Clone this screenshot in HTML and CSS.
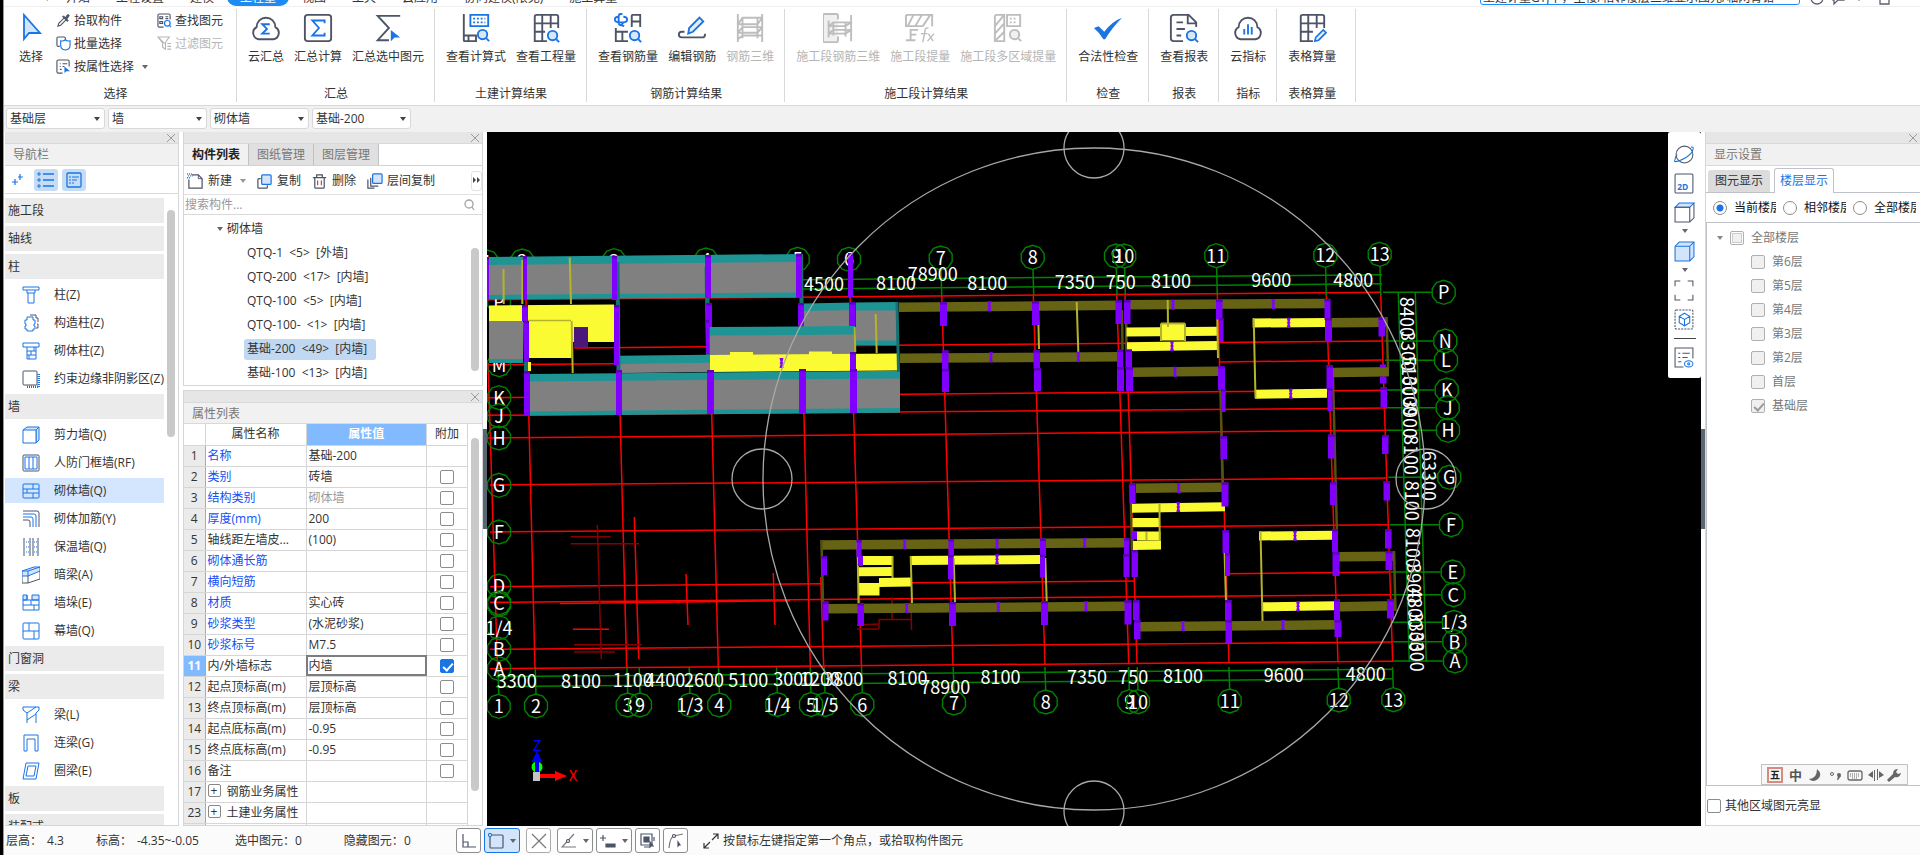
FILE: index.html
```html
<!DOCTYPE html>
<html lang="zh-CN">
<head>
<meta charset="utf-8">
<title>土建计量</title>
<link rel="stylesheet" href="styles.css">
</head>
<body>
<div class="app">
  <header class="tabstrip">
    <nav class="tabs">
      <button class="tab quick">▾</button>
      <button class="tab">开始</button><button class="tab">工程设置</button><button class="tab">建模</button><button class="tab active">工程量</button><button class="tab">视图</button><button class="tab">工具</button><button class="tab">云应用</button><button class="tab">协同建模(限免)</button><button class="tab">施工算量</button>
    </nav>
    <div class="finder">
      <input class="finder-input" aria-label="搜索" value="土建计量GTJ中，主楼/相邻楼层三维显示图元/轴网背错">
      <svg class="finder-icons" width="100" height="20" viewBox="0 0 100 20"><g fill="none" stroke="#5a6070" stroke-width="1.3"><circle cx="17" cy="12" r="6"/><path d="M33 6h11v8h-6l-4 4v-4h-1z"/><path d="M59 6v8m-4-4l4 4l4-4"/><path d="M80 7h9v11h-9z"/></g></svg>
    </div>
  </header>

  <section class="ribbon">
    <div class="group">
      <div class="tools">
        <button class="big pick"><svg class="ico" viewBox="0 0 30 30"><path d="M8 2v24l5-6h11z" fill="#d3e5fb" stroke="#1b74e4" stroke-width="1.8"/></svg>选择</button>
        <div class="smalls">
          <button class="small"><svg viewBox="0 0 16 16"><path d="M2 14l1-3l6-6l2 2l-6 6z" fill="none" stroke="#4d5468" stroke-width="1.2"/><path d="M8 3l5 5l-1 1l-5-5zM10 5l2-3q2-1 2 1l-2 3z" fill="#4d5468" stroke="#4d5468"/></svg>拾取构件</button>
          <button class="small"><svg viewBox="0 0 16 16"><g fill="none" stroke="#4d5468" stroke-width="1.2"><path d="M4 11H2.500q-1.500 0-1.500-1.500v-7q0-1.500 1.500-1.500h6q1.500 0 1.500 1.500V4"/><path d="M5 5q3 1 5-1q2 2 5 1v5q0 4-5 5q-5-1-5-5z" stroke="#1b74e4" fill="#fff"/></g></svg>批量选择</button>
          <button class="small"><svg viewBox="0 0 16 16"><g fill="none" stroke="#4d5468" stroke-width="1.200"><path d="M7 15H2.500Q1 15 1 13.500v-11Q1 1 2.500 1h10Q14 1 14 2.500V8"/><path d="M4 5h1m2 0h5M4 8h1m2 0h2M4 11h2"/></g><path d="M9 8v7l2-2h4z" fill="#1b74e4"/></svg>按属性选择<span class="caret"></span></button>
        </div>
        <div class="smalls second">
          <button class="small"><svg viewBox="0 0 16 16"><g fill="none" stroke="#4d5468" stroke-width="1.200"><path d="M7 15H2.500Q1 15 1 13.500v-11Q1 1 2.500 1h10Q14 1 14 2.500V7"/><path d="M3 4h3v2H3zm6 0h3M9 6h3M3 9h3v2H3z"/></g><circle cx="11" cy="11" r="3" fill="#fff" stroke="#1b74e4" stroke-width="1.300"/><path d="M13 13l2 2" stroke="#1b74e4" stroke-width="1.300"/></svg>查找图元</button>
          <button class="small" disabled><svg viewBox="0 0 16 16"><g fill="none" stroke="#b5b5b5" stroke-width="1.200"><path d="M1 1h12l-4 6v7l-3-2V7z"/><path d="M3 3l5 5M11 8h4m-4 3h4m-4 3h4"/></g></svg>过滤图元</button>
        </div>
      </div>
      <div class="caption">选择</div>
    </div>
    <div class="group">
      <div class="tools">
        <button class="big"><svg class="ico" viewBox="0 0 32 32"><path d="M8 28h16a7 7 0 0 0 2-13a10 10 0 0 0-20 0a7 7 0 0 0 2 13z" fill="none" stroke="#4d5468" stroke-width="2"/><path d="M20 12h-8l5 5l-5 5h8" fill="none" stroke="#1b74e4" stroke-width="2"/></svg>云汇总</button>
        <button class="big"><svg class="ico" viewBox="0 0 32 32"><rect x="2" y="2" width="28" height="28" rx="3" fill="none" stroke="#4d5468" stroke-width="2"/><path d="M23 11V8H10l7 8l-7 8h13v-3" fill="none" stroke="#1b74e4" stroke-width="2"/></svg>汇总计算</button>
        <button class="big"><svg class="ico" viewBox="0 0 32 32"><path d="M29 3H5l12 13L5 29h12" fill="none" stroke="#4d5468" stroke-width="2"/><path d="M19 18v12l4-4h6z" fill="#1b74e4"/></svg>汇总选中图元</button>
      </div>
      <div class="caption">汇总</div>
    </div>
    <div class="group">
      <div class="tools">
        <button class="big"><svg class="ico" viewBox="0 0 32 32"><path d="M3 1v28q0 1 1 1h12v-6H8v6M3 24h5" fill="none" stroke="#4d5468" stroke-width="2"/><path d="M10 2h19v12H10z" fill="none" stroke="#1b74e4" stroke-width="2"/><path d="M13 6h13M13 10h13" stroke="#1b74e4" stroke-width="2" stroke-dasharray="2 2"/><g fill="#d8e8fb" stroke="#1b74e4" stroke-width="2"><circle cx="23" cy="23" r="5"/><path d="M27 27l3 3"/></g></svg>查看计算式</button>
        <button class="big"><svg class="ico" viewBox="0 0 32 32"><g fill="none" stroke="#4d5468" stroke-width="2"><path d="M17 30H4V4q0-2 2-2h21q2 0 2 2v12M4 11h25M4 20h11M12 2v28M21 2v14"/></g><g fill="#d8e8fb" stroke="#1b74e4" stroke-width="2"><circle cx="23" cy="24" r="5"/><path d="M27 28l3 3"/></g></svg>查看工程量</button>
      </div>
      <div class="caption">土建计算结果</div>
    </div>
    <div class="group">
      <div class="tools">
        <button class="big"><svg class="ico" viewBox="0 0 32 32"><g fill="none" stroke="#1b74e4" stroke-width="2"><path d="M10 1H8q-2 0-2 3v6q0 3 3 3M6 4Q2 4 2 7t5 3h4q4 0 4-3t-4-3M11 10l-2 3l3 1"/></g><g fill="none" stroke="#4d5468" stroke-width="2"><path d="M20 15V3q0-1 1-1h8v13M20 9h9M3 16v14h13M3 20h13M10 20v10"/></g><g fill="#d8e8fb" stroke="#1b74e4" stroke-width="2"><circle cx="23" cy="24" r="5"/><path d="M27 28l3 3"/></g></svg>查看钢筋量</button>
        <button class="big"><svg class="ico" viewBox="0 0 32 32"><path d="M8 20H5q-3 0-3 3t3 3h22q3 0 3-4" fill="none" stroke="#4d5468" stroke-width="2"/><path d="M12 22l1-6L24 5l4 4L17 20z" fill="#e3eefc" stroke="#1b74e4" stroke-width="2"/></svg>编辑钢筋</button>
        <button class="big" disabled><svg class="ico" viewBox="0 0 32 32"><g fill="none" stroke="#bdbdbd" stroke-width="2"><path d="M3 1v30M8 5v22M29 1v30M24 5v22M3 12l5-7h21M3 12h21l5-7M3 21l5-6h21M3 21h21l5-6M3 28l5-4h21"/></g></svg>钢筋三维</button>
      </div>
      <div class="caption">钢筋计算结果</div>
    </div>
    <div class="group">
      <div class="tools">
        <button class="big" disabled><svg class="ico" viewBox="0 0 32 32"><g fill="none" stroke="#bdbdbd" stroke-width="2"><path d="M16 7V3q0-2-2-2H2Q0 1 0 3v26q0 2 2 2h12q2 0 2-2v-4" fill="#f0f0f0"/><path d="M6 8v18M11 10v14M30 2v28M24 9v16M6 14l5-4h19M6 14h18l6-4M6 22l5-4h19M6 22h18l6-4"/></g></svg>施工段钢筋三维</button>
        <button class="big" disabled><svg class="ico" viewBox="0 0 32 32"><g fill="none" stroke="#bdbdbd" stroke-width="2"><path d="M1 2h28v12M1 2v12h18M9 2L3 14M18 2l-7 12M27 2l-8 12M1 29h10M6 29V18h8M6 23h6"/><path d="M25 16q-4-1-4 5l-2 10M17 22h7M25 22l5 8M31 22l-7 8" stroke-width="1.500"/></g></svg>施工段提量</button>
        <button class="big" disabled><svg class="ico" viewBox="0 0 32 32"><g fill="none" stroke="#bdbdbd" stroke-width="2"><path d="M12 30H2V4q0-2 2-2h8zM12 2L2 14M12 11L2 22M12 20L2 30M15 2h14v12H15z"/><path d="M18 6h8M18 10h8" stroke-dasharray="2 2"/><circle cx="23" cy="23" r="5" fill="#f0f0f0"/><path d="M27 27l3 3"/></g></svg>施工段多区域提量</button>
      </div>
      <div class="caption">施工段计算结果</div>
    </div>
    <div class="group">
      <div class="tools"><button class="big"><svg class="ico" viewBox="0 0 32 32"><path d="M1 16l5-2l6 6Q20 9 31 5Q20 16 13 28h-2Q7 21 1 16z" fill="#1b74e4"/></svg>合法性检查</button></div>
      <div class="caption">检查</div>
    </div>
    <div class="group">
      <div class="tools"><button class="big"><svg class="ico" viewBox="0 0 32 32"><g fill="none" stroke="#4d5468" stroke-width="2"><path d="M15 30H5q-3 0-3-3V5q0-3 3-3h16l8 8v5M20 2v9h9M8 10h7M8 17h9M8 24h5"/></g><g fill="#d8e8fb" stroke="#1b74e4" stroke-width="2"><circle cx="24" cy="24" r="5"/><path d="M28 28l3 3"/></g></svg>查看报表</button></div>
      <div class="caption">报表</div>
    </div>
    <div class="group">
      <div class="tools"><button class="big"><svg class="ico" viewBox="0 0 32 32"><path d="M8 28h16a7 7 0 0 0 2-13a10 10 0 0 0-20 0a7 7 0 0 0 2 13z" fill="none" stroke="#4d5468" stroke-width="2"/><path d="M12 17v6M16 12v11M20 15v8" stroke="#1b74e4" stroke-width="2"/></svg>云指标</button></div>
      <div class="caption">指标</div>
    </div>
    <div class="group last">
      <div class="tools"><button class="big"><svg class="ico" viewBox="0 0 32 32"><g fill="none" stroke="#4d5468" stroke-width="2"><path d="M17 30H4V4q0-2 2-2h21q2 0 2 2v12M4 11h25M4 20h13M12 2v28M21 2v14"/></g><path d="M19 30l1-4l8-8l3 3l-8 8z" fill="#e3eefc" stroke="#1b74e4" stroke-width="1.700"/></svg>表格算量</button></div>
      <div class="caption">表格算量</div>
    </div>
  </section>

  <section class="filters">
    <label class="combo"><select aria-label="楼层"><option>基础层</option></select></label>
    <label class="combo"><select aria-label="构件类别"><option>墙</option></select></label>
    <label class="combo"><select aria-label="构件类型"><option>砌体墙</option></select></label>
    <label class="combo"><select aria-label="构件"><option>基础-200</option></select></label>
  </section>

  <main class="workspace">
    <aside class="panel nav">
      <div class="grip"><button class="close" aria-label="关闭导航栏"></button></div>
      <h2 class="title">导航栏</h2>
      <div class="navbar">
        <button class="navtool" aria-label="展开"><svg width="24" height="22" viewBox="0 0 24 22"><path d="M6 13h6M9 10v6M12 8h5M14 5v6" stroke="#1b74e4" stroke-width="1.200"/></svg></button>
        <button class="navtool on" aria-label="列表"><svg width="24" height="22" viewBox="0 0 24 22"><path d="M9 5h11M9 11h11M9 17h11" stroke="#1b74e4" stroke-width="1.300"/><path d="M4 4h2v2H4zM4 10h2v2H4zM4 16h2v2H4z" fill="none" stroke="#1b74e4"/></svg></button>
        <button class="navtool on" aria-label="分类"><svg width="24" height="22" viewBox="0 0 24 22"><rect x="5" y="4" width="14" height="14" rx="1" fill="none" stroke="#1b74e4" stroke-width="1.300"/><path d="M7 8h2m1 0h7M7 11h2m1 0h5M7 14h2m1 0h2" stroke="#1b74e4"/></svg></button>
      </div>
      <div class="navbody">
        <div class="navlist">
          <button class="cat">施工段</button>
          <button class="cat">轴线</button>
          <button class="cat">柱</button>
          <button class="item"><svg viewBox="0 0 18 18"><path d="M1 1h16v3H1zM5 4v3h8V4M6 7v10h6V7"/></svg>柱(Z)</button>
          <button class="item"><svg viewBox="0 0 18 18"><path class="d" d="M8 1h6v3h2v4m-1 2h1v4h-2"/><path d="M5 3h6v3h2v4h-1v2h1v3h-2v2H5v-2H3v-3h1v-2H3V6h2z" fill="#fff"/></svg>构造柱(Z)</button>
          <button class="item"><svg viewBox="0 0 18 18"><path d="M1 1h16v4H1zM5 5v12h9V5M5 9h9M5 13h9M9 9v4M12 5v4M7 13v4"/></svg>砌体柱(Z)</button>
          <button class="item"><svg viewBox="0 0 18 18"><path d="M17 4v13H4" stroke-width="3" stroke-dasharray="1 1"/><rect class="d" x="1" y="1" width="14" height="14" rx="1" fill="#fff"/></svg>约束边缘非阴影区(Z)</button>
          <button class="cat">墙</button>
          <button class="item"><svg viewBox="0 0 18 18"><path d="M1 4l4-3h12v13l-3 3V4M14 4l3-3" fill="#d3e5fb"/><path d="M1 4h13v13H1z" fill="#fff"/></svg>剪力墙(Q)</button>
          <button class="item"><svg viewBox="0 0 18 18"><rect class="d" x="1" y="1" width="16" height="16" rx="1"/><path d="M3 3h12v12H3zM7 3v12M11 3v12"/></svg>人防门框墙(RF)</button>
          <button class="item current"><svg viewBox="0 0 18 18"><rect x="1" y="2" width="16" height="14" rx="1"/><path d="M1 7h16M1 11h16M11 2v5M5 7v4M11 11v5"/></svg>砌体墙(Q)</button>
          <button class="item"><svg viewBox="0 0 18 18"><path class="d" d="M1 1h14q2 0 2 2v14M1 10h5q2 0 2 2v5"/><path d="M1 4h11q2 0 2 2v11M1 7h8q2 0 2 2v8"/></svg>砌体加筋(Y)</button>
          <button class="item"><svg viewBox="0 0 18 18"><path class="d" d="M2 0v18M8 0v18M11 0v18M16 0v18"/><path d="M4 4h3M4 9h3M4 14h3M12 4h3M12 9h3M12 14h3" stroke-dasharray="1 1"/></svg>保温墙(Q)</button>
          <button class="item"><svg viewBox="0 0 18 18"><path d="M0 5l12-4h6v4L6 10H0z" fill="#d3e5fb"/><path d="M0 5h6v5M6 5l12-4"/><path class="d" d="M0 10v7h6v-7M6 17l12-4V5"/></svg>暗梁(A)</button>
          <button class="item"><svg viewBox="0 0 18 18"><path d="M1 1h4v5H1zM10 1h7v5h-7z" fill="#d3e5fb"/><path d="M1 6h16v10H1zM1 11h16M9 6v5M5 6V1M12 11v5"/></svg>墙垛(E)</button>
          <button class="item"><svg viewBox="0 0 18 18"><rect x="1" y="1" width="16" height="16" rx="1"/><path d="M1 9h16M7 1v8M12 9v8"/></svg>幕墙(Q)</button>
          <button class="cat">门窗洞</button>
          <button class="cat">梁</button>
          <button class="item"><svg viewBox="0 0 18 18"><path d="M1 1h16v3l-3 3v10M1 1v3l4 3v10M5 7l9-6M5 14l9-6"/></svg>梁(L)</button>
          <button class="item"><svg viewBox="0 0 18 18"><path d="M2 17V1h14v16h-3V5H5v12z"/></svg>连梁(G)</button>
          <button class="item"><svg viewBox="0 0 18 18"><path d="M4 1h13l-3 16H1zM6 4h8l-2 10H4z"/></svg>圈梁(E)</button>
          <button class="cat">板</button>
          <button class="cat">装配式</button>
        </div>
        <div class="scroll"><div class="thumb nav-thumb"></div></div>
      </div>
    </aside>

    <div class="middle">
      <section class="panel comps">
        <div class="grip"><button class="close" aria-label="关闭构件列表"></button></div>
        <div class="ptabs"><button class="ptab on">构件列表</button><button class="ptab">图纸管理</button><button class="ptab">图层管理</button></div>
        <div class="ctools">
          <button class="ctool"><svg viewBox="0 0 18 18"><path d="M5 2h7l4 4v10H2V7" fill="none" stroke="#4d5468" stroke-width="1.300"/><path d="M12 2v4h4" fill="none" stroke="#4d5468"/><path d="M0 1h5M1 3h5M0 5h4" stroke="#1b74e4" stroke-width="1.500" stroke-dasharray="1 1"/></svg>新建<span class="caret"></span></button>
          <button class="ctool"><svg viewBox="0 0 18 18"><path d="M12 13v2q0 1-1 1H3q-1 0-1-1V7q0-1 1-1h2" fill="none" stroke="#4d5468" stroke-width="1.300"/><rect x="6" y="2" width="10" height="10" rx="1" fill="#d3e5fb" stroke="#1b74e4" stroke-width="1.300"/></svg>复制</button>
          <button class="ctool"><svg viewBox="0 0 18 18"><path d="M2 5h14M4 5v10q0 1 1 1h8q1 0 1-1V5M6 5V2h6v3" fill="none" stroke="#4d5468" stroke-width="1.300"/><path d="M7 8v5M11 8v5" stroke="#e23c3c" stroke-width="1.300"/></svg>删除</button>
          <button class="ctool"><svg viewBox="0 0 18 18"><path d="M2 7v9h7M5 5v9h8" fill="none" stroke="#4d5468" stroke-width="1.300"/><rect x="7" y="1" width="10" height="10" rx="1" fill="#d3e5fb" stroke="#1b74e4" stroke-width="1.300"/></svg>层间复制</button>
          <button class="more" aria-label="更多"><svg width="9" height="10" viewBox="0 0 9 10"><path d="M1 2l3 3l-3 3zM5 2l3 3l-3 3z" fill="#444"/></svg></button>
        </div>
        <div class="search"><input aria-label="搜索构件" placeholder="搜索构件..."><svg width="14" height="14" viewBox="0 0 14 14"><circle cx="6" cy="6" r="4" fill="none" stroke="#a2a2a2" stroke-width="1.300"/><path d="M9 9l2 3" stroke="#a2a2a2" stroke-width="1.300"/></svg></div>
        <div class="treebox">
          <ul class="tree">
            <li class="root"><span class="caret"></span>砌体墙</li>
            <li><span>QTQ-1  &lt;5&gt;  [外墙]</span></li>
            <li><span>QTQ-200  &lt;17&gt;  [内墙]</span></li>
            <li><span>QTQ-100  &lt;5&gt;  [内墙]</span></li>
            <li><span>QTQ-100-  &lt;1&gt;  [内墙]</span></li>
            <li><span class="sel">基础-200  &lt;49&gt;  [内墙]</span></li>
            <li><span>基础-100  &lt;13&gt;  [内墙]</span></li>
          </ul>
          <div class="scroll"><div class="thumb tree-thumb"></div></div>
        </div>
      </section>
      <section class="panel props">
        <div class="grip"><button class="close" aria-label="关闭属性列表"></button></div>
        <h2 class="title">属性列表</h2>
        <div class="propbody">
          <table class="ptable">
            <colgroup><col class="c-no"><col class="c-name"><col><col class="c-check"></colgroup>
            <thead><tr><th class="no"></th><th>属性名称</th><th class="hot">属性值</th><th>附加</th></tr></thead>
            <tbody>
              <tr><th>1</th><td class="key">名称</td><td>基础-200</td><td></td></tr>
              <tr><th>2</th><td class="key">类别</td><td>砖墙</td><td><input type="checkbox" aria-label="附加 类别"></td></tr>
              <tr><th>3</th><td class="key">结构类别</td><td class="dim">砌体墙</td><td><input type="checkbox" aria-label="附加 结构类别"></td></tr>
              <tr><th>4</th><td class="key">厚度(mm)</td><td>200</td><td><input type="checkbox" aria-label="附加 厚度"></td></tr>
              <tr><th>5</th><td>轴线距左墙皮...</td><td>(100)</td><td><input type="checkbox" aria-label="附加 轴线距左墙皮"></td></tr>
              <tr><th>6</th><td class="key">砌体通长筋</td><td></td><td><input type="checkbox" aria-label="附加 砌体通长筋"></td></tr>
              <tr><th>7</th><td class="key">横向短筋</td><td></td><td><input type="checkbox" aria-label="附加 横向短筋"></td></tr>
              <tr><th>8</th><td class="key">材质</td><td>实心砖</td><td><input type="checkbox" aria-label="附加 材质"></td></tr>
              <tr><th>9</th><td class="key">砂浆类型</td><td>(水泥砂浆)</td><td><input type="checkbox" aria-label="附加 砂浆类型"></td></tr>
              <tr><th>10</th><td class="key">砂浆标号</td><td>M7.5</td><td><input type="checkbox" aria-label="附加 砂浆标号"></td></tr>
              <tr><th class="hot">11</th><td>内/外墙标志</td><td class="editing">内墙</td><td><input type="checkbox" checked aria-label="附加 内/外墙标志"></td></tr>
              <tr><th>12</th><td>起点顶标高(m)</td><td>层顶标高</td><td><input type="checkbox" aria-label="附加 起点顶标高"></td></tr>
              <tr><th>13</th><td>终点顶标高(m)</td><td>层顶标高</td><td><input type="checkbox" aria-label="附加 终点顶标高"></td></tr>
              <tr><th>14</th><td>起点底标高(m)</td><td>-0.95</td><td><input type="checkbox" aria-label="附加 起点底标高"></td></tr>
              <tr><th>15</th><td>终点底标高(m)</td><td>-0.95</td><td><input type="checkbox" aria-label="附加 终点底标高"></td></tr>
              <tr><th>16</th><td>备注</td><td></td><td><input type="checkbox" aria-label="附加 备注"></td></tr>
              <tr><th>17</th><td><button class="plus">+</button>钢筋业务属性</td><td></td><td></td></tr>
              <tr><th>23</th><td><button class="plus">+</button>土建业务属性</td><td></td><td></td></tr>
              <tr><th></th><td></td><td></td><td></td></tr>
            </tbody>
          </table>
          <div class="scroll"><div class="thumb prop-thumb"></div></div>
        </div>
      </section>
    </div>

    <div class="splitter"><span class="handle"></span></div>
    <div class="viewport">
      <svg id="model" class="model" viewBox="487 132 1214 694" preserveAspectRatio="xMinYMin slice"></svg>
      <div class="viewtools">
        <button aria-label="动态观察"><svg viewBox="0 0 20 20"><circle class="d" cx="10" cy="10" r="8"/><path d="M1 15q-2 3 4 1q8-3 12-8q3-6-1-5M1 15q0-3 2-5"/></svg></button>
        <button aria-label="二维"><svg viewBox="0 0 20 20"><rect class="d" x="1" y="1" width="17" height="18" rx="1"/><text x="3" y="16">2D</text></svg></button>
        <button class="drop" aria-label="三维"><svg viewBox="0 0 20 20"><path d="M1 5l4-4h14l-4 4z" fill="#d3e5fb"/><path class="d" d="M1 5h14v14H1zM19 1v14l-4 4"/></svg><span class="caret"></span></button>
        <button class="drop" aria-label="实体"><svg viewBox="0 0 20 20"><path d="M1 5l4-4h14v14l-4 4H1z" fill="#d3e5fb"/><path d="M1 5h14v14M15 5l4-4"/></svg><span class="caret"></span></button>
        <button aria-label="全屏"><svg viewBox="0 0 20 20"><path class="d" d="M1 6V1h5M13 1h5v5M18 14v5h-5M6 19H1v-5"/></svg></button>
        <button aria-label="局部三维"><svg viewBox="0 0 20 20"><rect class="d" x="1" y="1" width="17" height="18" rx="1" stroke-dasharray="2 1"/><path d="M10 4l5 3v6l-5 3l-5-3V7zM5 7l5 3l5-3M10 10v6"/></svg></button>
        <hr>
        <button aria-label="显示设置"><svg viewBox="0 0 20 20"><path class="d" d="M9 19H1V1h17v10M4 6h2m2 0h7M4 10h2m2 0h5M4 14h3"/><ellipse cx="14" cy="16" rx="4" ry="3"/><circle cx="14" cy="16" r="1"/></svg></button>
      </div>
    </div>
    <div class="splitter right"><span class="handle"></span></div>

    <aside class="panel display">
      <div class="grip"><button class="close" aria-label="关闭显示设置"></button></div>
      <h2 class="title">显示设置</h2>
      <div class="dtabs"><button class="dtab">图元显示</button><button class="dtab on">楼层显示</button></div>
      <div class="radios">
        <label><input type="radio" name="scope" checked><span>当前楼层</span></label>
        <label><input type="radio" name="scope"><span>相邻楼层</span></label>
        <label><input type="radio" name="scope"><span>全部楼层</span></label>
      </div>
      <div class="floors">
        <label class="all"><span class="caret"></span><input type="checkbox" class="part">全部楼层</label>
        <label><input type="checkbox">第6层</label>
        <label><input type="checkbox">第5层</label>
        <label><input type="checkbox">第4层</label>
        <label><input type="checkbox">第3层</label>
        <label><input type="checkbox">第2层</label>
        <label><input type="checkbox">首层</label>
        <label><input type="checkbox" checked>基础层</label>
        <div class="ime">
          <span class="wubi">五</span><span class="zh">中</span>
          <svg width="94" height="14" viewBox="0 0 94 14"><g fill="#666"><path d="M9 1q6 5 1 10q-5 4-9 0q8 0 8-10z"/><circle cx="31" cy="7" r="2"/><path d="M33 8l-3 4l-1 0l1-4z"/><path d="M66 2h1v11h-1zM69 1h1v11h-1zM60 7l5-4v7zM76 7l-5-4v7z"/><path d="M79 12l6-6q0-5 5-5l-2 3l2 2l3-1q-1 5-6 4l-6 5z"/></g><circle cx="24" cy="6" r="1.500" fill="none" stroke="#666"/><rect x="40" y="3" width="14" height="9" rx="2" fill="none" stroke="#666" stroke-width="1.300"/><path d="M42 6h10M42 8h10M44 10h6" stroke="#666" stroke-dasharray="1 1"/></svg>
        </div>
      </div>
      <label class="highlight"><input type="checkbox">其他区域图元亮显</label>
    </aside>
  </main>

  <footer class="status">
    <dl class="facts">
      <div><dt>层高：</dt><dd>4.3</dd></div>
      <div><dt>标高：</dt><dd>-4.35~-0.05</dd></div>
      <div><dt>选中图元：</dt><dd>0</dd></div>
      <div><dt>隐藏图元：</dt><dd>0</dd></div>
    </dl>
    <div class="modes">
      <button aria-label="正交"><svg viewBox="0 0 16 16"><path d="M2 1v13h13M2 9h5v5"/></svg></button>
      <button class="wide on" aria-label="矩形"><svg viewBox="0 0 16 16"><rect x="2" y="2" width="13" height="13" rx="1"/><circle cx="2" cy="2" r="1.500" fill="#fff" stroke="#1b74e4"/></svg><span class="caret"></span></button>
      <button class="cross" aria-label="交点"><svg viewBox="0 0 16 16"><path d="M1 1l14 14M15 1L1 15" stroke="#777"/></svg></button>
      <button class="wide" aria-label="角度"><svg viewBox="0 0 16 16"><path d="M13 1L1 14h14" stroke="#777"/><circle cx="7" cy="8" r="1.500" fill="#fff"/></svg><span class="caret"></span></button>
      <button class="wide" aria-label="偏移"><svg viewBox="0 0 16 16"><path d="M0 5h6M3 2v6"/><path d="M6 11h9v3H6z" fill="#4d5468"/></svg><span class="caret"></span></button>
      <button aria-label="图层"><svg viewBox="0 0 16 16"><path d="M4 4h5v5H4z" fill="#4d5468"/><path d="M4 14h6M14 4v4M1 1h11v11H1z"/><path d="M10 9v5l1-1h2z" fill="#4d5468"/></svg></button>
      <button aria-label="路径"><svg viewBox="0 0 16 16"><path d="M1 15Q2 4 6 3l9-2" stroke="#777"/><circle cx="6" cy="3" r="1.500" fill="#fff"/><path d="M10 9v4l1-1h1z" fill="#4d5468"/></svg></button>
    </div>
    <p class="hint"><svg width="16" height="16" viewBox="0 0 16 16"><path d="M9 7l6-6M10 1h5v5M7 9l-6 6M1 10v5h5" fill="none" stroke="#333" stroke-width="1.200"/></svg>按鼠标左键指定第一个角点，或拾取构件图元</p>
  </footer>
</div>
<script src="model.js"></script>
</body>
</html>
```
FILE: styles.css
```css
* { box-sizing: border-box; }
body { margin: 0; font: 12px/16px "Open Sans", "Noto Sans CJK SC", sans-serif; color: #333; background: #fff; }
button, input, select { font: inherit; color: inherit; margin: 0; padding: 0; border: 0; background: none; }
button { white-space: nowrap; }
h2, p, dl, dd, ul { margin: 0; padding: 0; font-size: 12px; font-weight: 400; }
ul { list-style: none; }
input[type="checkbox"], input[type="radio"] { appearance: none; flex: none; width: 14px; height: 14px; border: 1px solid #8c8c8c; border-radius: 2px; background: #fff; display: inline-block; vertical-align: middle; position: relative; }
input[type="checkbox"]:checked::after { content: ""; position: absolute; left: 4px; top: 1px; width: 4px; height: 8px; border: solid #fff; border-width: 0 2px 2px 0; transform: rotate(42deg); }
.caret { display: inline-block; flex: none; border: 3px solid transparent; border-top: 4px solid #666; border-bottom: 0; }

.app { height: 100vh; display: flex; flex-direction: column; border-left: 3px solid #000; box-shadow: inset 1px 0 #9a9a9a; padding-left: 1px; overflow: hidden; }

.tabstrip { flex: none; height: 7px; border-bottom: 1px solid #f0f0f0; overflow: hidden; display: flex; justify-content: space-between; align-items: flex-end; }
.tabs { display: flex; padding-left: 38px; }
.tab { height: 16px; padding: 0 13px; line-height: 16px; }
.tab.quick { padding: 0 3px; font-size: 9px; }
.tab.active { background: #1e8bf5; color: #fff; border-radius: 0 0 9px 9px; }
.finder { display: flex; align-items: flex-end; padding-right: 20px; }
.finder-input { width: 320px; height: 16px; margin-bottom: 1px; padding: 0 2px; border: 1px solid #1e8bf5; border-radius: 3px; line-height: 14px; }

.ribbon { flex: none; display: flex; height: 99px; padding: 2px 0 3px; border-bottom: 1px solid #d9d9d9; }
.group { display: flex; flex-direction: column; justify-content: space-between; padding: 0 5px 0 6px; border-right: 1px solid #d9d9d9; }
.group:first-child { padding-right: 13px; padding-left: 4px; }
.group.last { padding-right: 14px; }
.tools { display: flex; height: 76px; }
.big { display: flex; flex-direction: column; align-items: center; gap: 6px; padding: 4px 5px 0; height: 60px; }
.pick { padding: 4px 5px 0 8px; }
.ico { width: 30px; height: 30px; }
button:disabled { color: #b5b5b5; }
.smalls { display: flex; flex-direction: column; padding-left: 5px; }
.smalls.second { padding-left: 9px; }
.small { display: flex; align-items: center; gap: 3px; height: 23px; }
.small svg { width: 15px; height: 15px; }
.small .caret { margin-left: 5px; }
.caption { text-align: center; height: 16px; }

.filters { flex: none; display: flex; gap: 3px; height: 26px; padding: 2px 2px 3px; background: #f1f1f1; }
.combo { position: relative; width: 99px; }
.combo select { appearance: none; width: 100%; height: 21px; padding: 0 3px; border: 1px solid #d8d8d8; border-radius: 3px; background: #fff; }
.combo::after { content: ""; position: absolute; right: 5px; top: 9px; border: 3px solid transparent; border-top: 4px solid #444; border-bottom: 0; }

.workspace { flex: 1; min-height: 0; display: flex; padding-left: 1px; }
.panel { display: flex; flex-direction: column; min-height: 0; border: 1px solid #d4d6d9; border-width: 0 1px 1px 0; background: #fff; }
.grip { flex: none; height: 12px; background: #e6e6e6; border-bottom: 1px solid #d9d9d9; display: flex; justify-content: flex-end; padding-right: 3px; }
.close { width: 9px; height: 11px; background: linear-gradient(45deg, transparent 46%, #999 46% 54%, transparent 54%), linear-gradient(-45deg, transparent 46%, #999 46% 54%, transparent 54%); background-size: 8px 8px; background-repeat: no-repeat; background-position: center; }
.title { flex: none; height: 22px; line-height: 21px; padding-left: 8px; color: #777; background: #f1f1f1; border-bottom: 1px solid #d9d9d9; }
.scroll { flex: none; width: 14px; padding: 0 3px; }
.thumb { width: 8px; border-radius: 4px; background: #c9c9c9; }

.nav { flex: none; width: 174px; }
.navbar { flex: none; display: flex; gap: 4px; height: 28px; padding: 3px 0 0 1px; border-bottom: 1px solid #d9d9d9; }
.navtool { width: 24px; height: 22px; border-radius: 3px; }
.navtool.on { background: #c5dcf5; }
.navtool svg { display: block; }
.navbody { flex: 1; min-height: 0; display: flex; overflow: hidden; padding-top: 4px; }
.navlist { flex: 1; min-width: 0; display: flex; flex-direction: column; gap: 3px; }
.cat, .item { flex: none; height: 25px; text-align: left; overflow: hidden; }
.cat { padding-left: 3px; background: #ebebeb; }
.item { display: flex; align-items: center; gap: 14px; padding-left: 17px; }
.item.current { background: #d3e6fd; }
.item svg { flex: none; width: 18px; height: 18px; fill: none; stroke: #1b74e4; stroke-width: 1; }
.item svg .d { stroke: #4d5468; }
.nav-thumb { height: 66%; max-height: 227px; margin-top: 12px; }

.middle { flex: none; width: 300px; margin-left: 4px; display: flex; flex-direction: column; gap: 4px; }
.comps { flex: none; border-left-width: 1px; }
.ptabs { flex: none; display: flex; height: 22px; border-bottom: 1px solid #d0d2d6; }
.ptab { width: 65px; border-right: 1px solid #bfc1c5; background: #e0e0e0; color: #777; }
.ptab.on { background: #f1f1f1; color: #222; font-weight: 700; }
.ctools { flex: none; display: flex; align-items: center; gap: 10px; height: 29px; padding: 2px 0 0 3px; border-bottom: 1px solid #e2e2e2; }
.ctool { display: flex; align-items: center; gap: 4px; }
.ctool svg { width: 17px; height: 17px; }
.ctool .caret { margin-left: 4px; border-top-color: #999; }
.more { margin-left: auto; width: 11px; height: 20px; border: 1px solid #e2e2e2; border-radius: 3px; overflow: hidden; }
.search { flex: none; display: flex; align-items: center; height: 20px; padding: 0 5px 0 1px; border-bottom: 1px solid #d9d9d9; }
.search input { flex: 1; min-width: 0; outline: 0; }
.search input::placeholder { color: #999; }
.treebox { display: flex; height: 170px; padding-top: 2px; }
.tree { flex: 1; }
.tree li { height: 24px; padding: 2px 0 2px 60px; }
.tree li > span:not(.caret) { display: inline-block; height: 21px; line-height: 20px; padding: 0 9px 0 3px; border-radius: 3px; white-space: pre; }
.tree .root { display: flex; align-items: center; gap: 4px; padding-left: 33px; }
.tree .sel { background: #c1d8f2; }
.tree-thumb { height: 123px; margin-top: 31px; }

.props { flex: 1; border-width: 1px; }
.props .title { height: 21px; }
.propbody { flex: 1; min-height: 0; display: flex; overflow: hidden; }
.ptable { flex: 1; align-self: flex-start; table-layout: fixed; border-collapse: collapse; width: 0; }
.c-no { width: 21px; }
.c-name { width: 101px; }
.c-check { width: 41px; }
.ptable th, .ptable td { height: 21px; padding: 0 2px; border: 1px solid #d6d6d6; border-width: 0 1px 1px 0; font-weight: 400; white-space: nowrap; line-height: 16px; overflow: hidden; }
.ptable tbody th { background: #ebebeb; padding: 0; border-right-color: #aaa; }
.ptable td:last-child { text-align: center; padding: 0; border-color: #d6d6d6; }
.ptable .hot, .ptable tbody th.hot { background: #82baff; color: #fff; font-weight: 700; }
.ptable .key { color: #1450f5; }
.ptable .dim { color: #999; }
.ptable td.editing { outline: 2px solid #7d7d7d; outline-offset: -2px; }
.ptable td:last-child input { display: block; margin: 0 auto; }
.ptable input:checked { background: #1b74e4; border-color: #1b74e4; }
.plus { width: 13px; height: 13px; margin-right: 6px; border: 1px solid #888; border-radius: 2px; line-height: 10px; vertical-align: 1px; }
.prop-thumb { height: 353px; margin-top: 14px; }

.splitter { flex: none; width: 4px; display: flex; align-items: center; }
.handle { width: 4px; height: 100px; background: #5b6770; }
.viewport { flex: 1; min-width: 0; position: relative; background: #000; overflow: hidden; }
.model { display: block; width: 100%; height: 100%; }
.model text { font: 18px "Noto Sans CJK SC", sans-serif; text-anchor: middle; fill: #fff; }
.viewtools { position: absolute; top: 0; right: 0; width: 33px; padding: 12px 6px 10px; background: #fff; border-radius: 2px; display: flex; flex-direction: column; gap: 8px; }
.viewtools button { display: flex; flex-direction: column; align-items: center; gap: 6px; }
.viewtools svg { width: 21px; height: 21px; fill: none; stroke: #1b74e4; stroke-width: 1; }
.viewtools svg .d { stroke: #4d5468; }
.viewtools text { font: 700 8px "Open Sans", sans-serif; fill: #1b74e4; stroke: none; }
.viewtools hr { width: 22px; margin: 0; border: 0; border-top: 1px solid #444; }

.display { flex: none; width: 215px; border-width: 0 0 1px 1px; }
.dtabs { flex: none; display: flex; align-items: flex-end; gap: 4px; height: 27px; padding-left: 2px; border-bottom: 1px solid #bfc3c9; }
.dtab { height: 22px; padding: 0 7px; border-radius: 3px 3px 0 0; background: #dcdcdc; }
.dtab.on { height: 25px; margin-bottom: -1px; padding: 0 5px; color: #1b74e4; background: #fff; border: 1px solid #bfc3c9; border-bottom: 0; }
.radios { flex: none; display: flex; align-items: center; height: 29px; padding-left: 7px; }
.radios label { display: flex; align-items: center; gap: 7px; flex: none; width: 70px; color: #111; }
.radios span { width: 42px; overflow: hidden; white-space: nowrap; }
.radios input { border-radius: 50%; }
.radios input:checked { background: radial-gradient(#1b74e4 3px, #fff 4px); }
.floors { flex: 1; min-height: 0; display: flex; flex-direction: column; padding-top: 3px; border: 1px solid #bfc3c9; border-right: 0; color: #777; position: relative; }
.floors label { display: flex; align-items: center; gap: 7px; height: 24px; padding-left: 44px; }
.floors .all { padding-left: 10px; }
.floors .all .caret { border-top-color: #888; }
.floors input { background: #f0f0f0; border-color: #b0b0b0; }
.floors .part { box-shadow: inset 0 0 0 1px #fff, inset 0 0 0 2px #ccc; }
.floors input:checked::after { border-color: #999; }
.ime { position: absolute; right: 12px; bottom: 0; height: 21px; width: 147px; padding: 2px 5px; display: flex; align-items: center; gap: 6px; border: 1px solid #c2c2c2; background: #f7f7f7; }
.wubi { width: 16px; height: 16px; border: 2px solid #d98a80; color: #222; font: 700 10px/12px "Noto Sans CJK SC", sans-serif; text-align: center; }
.zh { font: 700 13px/16px "Noto Sans CJK SC", sans-serif; color: #555; }
.highlight { flex: none; display: flex; align-items: center; gap: 4px; height: 39px; padding-left: 1px; }

.status { flex: none; height: 29px; display: flex; align-items: center; background: #fbfbfb; }
.facts { display: flex; width: 452px; padding-left: 2px; gap: 32px; }
.facts div { display: flex; gap: 5px; }
.facts div:nth-child(n+3) { gap: 0; padding-left: 10px; }
.facts div:nth-child(3) { padding-left: 4px; }
.modes { display: flex; gap: 3px; }
.modes button { display: flex; align-items: center; justify-content: center; gap: 6px; width: 25px; height: 25px; border: 1px solid #8d8d8d; border-radius: 3px; background: #fff; }
.modes .wide { width: 36px; }
.modes .cross { margin: 0 3px; border-color: #aaa; }
.modes .on { background: #d3e5fb; border-color: #1b74e4; }
.modes svg { width: 16px; height: 16px; fill: none; stroke: #4d5468; stroke-width: 1.2; }
.hint { display: flex; align-items: center; gap: 4px; padding-left: 15px; }
```
FILE: model.js
```js
const svg = document.getElementById('model');
const parts = [];
const OLIVE = '#666414', YELLOW = '#fbfb33', PURPLE = '#7f00ff', TEAL = '#1f9494', GRAY = '#808080', THIN = '#b4b42c', RED = '#ff0000', GREEN = '#008200';

const line = (c, x1, y1, x2, y2, w = 1.5) => parts.push(`<line x1="${x1}" y1="${y1}" x2="${x2}" y2="${y2}" stroke="${c}" stroke-width="${w}"/>`);
const poly = (c, pts) => parts.push(`<polygon points="${pts}" fill="${c}"/>`);
const rect = (c, x, y, w, h) => parts.push(`<rect x="${x}" y="${y}" width="${w}" height="${h}" fill="${c}"/>`);
// Slanted bar: left top, right top, height
const bar = (c, x1, y1, x2, y2, h = 9.5) => poly(c, `${x1},${y1} ${x2},${y2} ${x2},${y2 + h} ${x1},${y1 + h}`);
const label = (s, x, y, rot) => parts.push(`<text x="${x}" y="${y + 7}"${rot ? ` transform="rotate(90 ${x} ${y})"` : ''}>${s}</text>`);
const bubble = (x, y) => {
  let p = '';
  for (let i = 0; i < 10; i++) { const a = i * Math.PI / 5 + .3; p += `${(x + 12 * Math.cos(a)).toFixed(1)},${(y + 12 * Math.sin(a)).toFixed(1)} `; }
  parts.push(`<polygon points="${p}" fill="none" stroke="${GREEN}" stroke-width="1.4"/>`);
};

// Horizontal axes
[[488,299.7,1381,292.3],[574,348,1383,341],[1220,362,1383,360],[488,364.7,617,363.7],[488,397.7,1387,390.3],[488,415.3,1387,408],[488,438,1387,430.3],[490,485,1387,478],[490,532,1388,524.7],[1227,573.7,1390,572],[490,586.7,823,583.7],[912,582.7,1134,581],[490,602.3,1390,594.7],[490,649.3,1392,642],[490,668.7,1393,661.3],[560,603.5,790,600.7]].forEach(a => line(RED, ...a));
// Vertical axes
[[488,363,497.5,669],[526,300,535,669],[617,297,626.7,668],[634.3,517,638.7,659],[708.7,297,718.3,667],[801,297,810.3,667],[820.7,577,823.7,667],[850,297,861.5,667],[941.7,295,953,666],[1033.3,295,1045,665],[1116.7,295,1128.7,663],[1125,295,1137,663],[1217.3,293,1229,663],[1326.3,293,1338,662],[1380.7,293,1392.7,662],[686,574,688,625],[773.3,573,775,625],[573,629.3,609,629.3]].forEach(a => line(RED, ...a));
[[597.3,525,601.3,659],[570.7,536.7,610.7,536.7],[570.7,543.7,639,543.7],[574,644.7,642,644.7],[574,652,615,652],[857,629,879,629],[857,625,879,624],[879,629,879,619.5],[879,619.5,911,619.5],[892,597,892,619],[911,600,911.5,630]].forEach(a => line('#850000', ...a));

// Dimension lines
[[803,279.7,1382,274.7],[803,289,1382,283.7],[496,676.7,1393,669.3],[496,686.7,1393,678.7],[1398.3,293,1409.3,662],[1415.3,293,1426.3,662]].forEach(a => line(GREEN, ...a));

// Axis bubbles
const topAxes = [['1',487,262],['2',522.3,261],['3',614,260.7],['4',706,260],['5',797.7,259.3],['6',849,259.3],['7',940.7,258],['8',1032.7,257.3],['9',1116,256],['10',1124.3,256],['11',1216.3,255.7],['12',1325.3,255.3],['13',1379.7,254.3]];
const bottomAxes = [['1',498.7,706.3],['2',536,706],['3',627.7,705],['9',640,705],['1/3',690,705],['4',719.3,705],['1/4',777.3,704.5],['5',811,704.5],['1/5',825,704.5],['6',862.3,704.5],['7',954,703],['8',1045.7,702],['9',1129.3,701.7],['10',1138,701.7],['11',1229.7,701],['12',1338.7,700],['13',1393.3,699.7]];
const rightAxes = [['P',1443.7,292.3],['N',1445.3,341],['L',1446,360.3],['K',1446.7,390],['J',1447.7,407.7],['H',1448,430.3],['G',1449.3,477.3],['F',1451,524.7],['E',1452.7,572],['C',1453.3,594.7],['1/3',1454,622.3],['B',1454.3,641.7],['A',1455,661]];
const leftAxes = [['P',499,302],['M',499,364.7],['K',499,397.7],['J',499,415.7],['H',499,438],['G',499,485.3],['F',499,532],['D',499,586],['C',499,602.7],['1/4',499,627.7],['B',499,649.3],['A',499,668.7]];
topAxes.forEach(([s, x, y]) => { bubble(x, y); line(GREEN, x + .3, y + 12, x + 1, 295); label(s, x, y); });
bottomAxes.forEach(([s, x, y]) => { bubble(x, y); line(GREEN, x - .8, 667, x, y - 12); label(s, x, y); });
rightAxes.forEach(([s, x, y]) => { bubble(x, y); line(GREEN, 1383 + (y - 292) * .028, y, x - 12, y); label(s, x, y); });
leftAxes.forEach(([s, x, y]) => { bubble(x, y); label(s, x, y); });
bubble(499, 604.5);

[['4500',824,284],['8100',896,283],['78900',932.7,274.3],['8100',987.3,282.7],['7350',1074.7,282],['750',1120.7,282],['8100',1171,281.3],['9600',1271.3,280.3],['4800',1353.3,280],
['3300',516.7,681.3],['8100',581,680.7],['1100',632.7,680.3],['4400',665.3,680],['2600',704,680],['5100',748.3,679.5],['3000',793.3,679.3],['1200',820,679.3],['3800',843.3,679.3],['8100',907.4,678],['78900',945.3,687],['8100',1000.4,677],['7350',1087,676.5],['750',1133.3,676.7],['8100',1183,676],['9600',1283.7,675.3],['4800',1365.7,674.3]].forEach(a => label(...a));
[['8400',1406.7,317],['3300',1408,351],['5100',1409,376],['3000',1409.5,396],['3900',1410.3,418],['8100',1411.3,455],['63300',1428.7,476],['8100',1412.3,500.7],['8100',1413.3,548],['3900',1414.3,583.3],['4800',1415,608],['3300',1415.7,631.7],['3300',1417.3,651.7]].forEach(a => label(...a, true));

// Left wing: slabs and stairs
poly(TEAL, '488,257 802,254 802,297.5 488,299.5');
poly(GRAY, '488,265 797,262 797,292.5 488,295');
rect(GRAY, 489, 321, 34, 39); rect(TEAL, 489, 359, 34, 4);
poly(YELLOW, '489,305.5 614,304.5 614,342 571.5,342 571.5,358 528.7,358 528.7,321 489,321');
rect('#000', 572, 342, 42, 5); rect('#4b177b', 574, 327, 14, 20);
bar(TEAL, 617.5, 355.7, 710, 354.7, 17); bar(GRAY, 617.5, 364, 710, 362.7, 9);
poly(TEAL, '803,303.5 855,302.5 855,327 803,327'); poly(GRAY, '803,311 855,310 855,327 803,327');
poly(TEAL, '855.5,302.5 898,302 898,345 855.5,345'); rect(GRAY, 856, 310.5, 40, 30);
poly(TEAL, '710,327 855,326 855,355 710,355'); poly(GRAY, '710,335.5 855,334.5 855,355 710,355');
bar(YELLOW, 710, 355, 897.5, 353.5, 17); rect(YELLOW, 730, 352, 23, 4); rect(YELLOW, 809, 351.5, 23, 4);
poly(TEAL, '530,374 900,370.7 900,412.7 530,415.7'); poly(GRAY, '530,381.5 900,378.5 900,408 530,411.5');
[[617.5,262,618.5,374],[706.5,267,708,355],[801,254,801.5,303],[525,322,526,372]].forEach(a => line('#187070', ...a, 4));
line('#187070', 897, 302, 898.5, 372, 3);
[[522.3,260,522.3,304],[569.7,257.5,571,304],[503.5,269,503.7,304],[571.7,321,572.7,373],[875.7,314,876.7,353],[854.7,327,855.3,352]].forEach(a => line(THIN, ...a, 2));
line(THIN, 528, 320.5, 571, 320.5); rect(YELLOW, 528, 362, 3, 9);

// Right wing: wall bodies
[[899,302.5,1122,300.5],[1130,300,1330,298.7],[900,353.5,1120,352],[1132,367.5,1219,366.5],[1330,318,1387,317.5],[1333,367.7,1389,367],[1136,483.5,1223,482.5],[1338,552,1394,551.5],[1340,602,1395,601],[1140,622,1335,620],[820.7,540.3,1124,538],[827,604,1125,601.5]].forEach(a => bar(OLIVE, ...a));
[[1386.5,317,1388,368],[1122,310,1122.5,350],[1126,302,1126.5,350],[1220.5,390,1222.5,483],[1333,377,1337,535],[1394,551,1395.5,611],[821.5,540,823,603],[1130.5,485,1132,550]].forEach(a => line('#55520f', ...a, 2.5));
[[1126.5,327.5,1218,326.7],[1127,342.3,1218,341],[1252.7,318.5,1326,318],[1255,389.7,1327,388.7],[1132,503.7,1225,502.3],[1132.5,518,1159,518],[1137,531.5,1160.5,531.5],[1133,541,1161,540.5],[1259,531.5,1332,530.7],[1262.5,602.3,1334,601.3],[862,556,892,556],[857.5,567.3,892,567],[879,578,911,577.5],[858,586.5,879.5,586.5],[910,556,1040,555]].forEach(a => bar(YELLOW, ...a, 9));
rect(YELLOW, 1161, 323.5, 24, 17); rect(YELLOW, 858, 583, 21, 5);
[[1161,323.5,1161,341],[1185,323.5,1185,341],[1161,323.5,1185,323.5],[1217,303,1218,358],[1167.7,300,1168,327],[1253.7,318,1255.5,398],[1038,305,1039,349],[1076.7,302,1078.3,352],[1159.5,503,1159.7,540],[1146.5,532,1146.5,540],[1260.5,531,1262.5,621],[1224,533,1226.5,619],[857.5,542,858.5,603],[892.5,556,892.5,578],[910.7,556,912,603],[953.7,558,955,602],[1045.3,558,1046.7,601]].forEach(a => line(THIN, ...a, 2));

// Columns
[[487,257,2,43],[523,256,4,44],[612,256,5,44],[705,255,6,43],[796,254,6,44],[848,253,5,44],[522,305,6,16],[524,321,5,41],[614,305,5,60],[706,303,6,24],[706,320,3,34],[798,303,6,23],[849,302,6,24],[524,371,6,45],[616,370,6,45],[707,370,7,44],[799,369,7,44],[850,352,6,18],[850,369,7,44],
[940,302,7,24],[942,350.5,6.5,20],[942,369,7,23],[1032,301,7,24],[1033.5,350,6.5,19],[1034,368,7,23],[1115.5,300,6.5,24],[1117,349.5,6,20],[1117,367,7,24],[1124,300,6.5,24],[1125.5,349.5,6.5,20],[1126,367,7,24],[1216,299.5,6.5,20],[1219,318,4.5,24],[1218,366,7,24],[1221,389,4.5,23],[1220.5,436,6.5,23],[1324.5,299,6,21],[1325,318,7,24],[1326.5,365,6.5,24],[1327.5,388,5,23],[1328,434.5,6.5,24],[1378.5,317.5,6.5,19],[1380,364.5,6,3],[1380,376.5,6.5,7],[1380.5,387.5,6.5,19.5],[1382,435,6.5,19],
[1330,482,6.5,23],[1332,529,6,23],[1332.5,552,7,24],[1334,599,6,21],[1334.5,620,7,17],[1383.5,481,6.5,19.5],[1385,529,6.5,19.5],[1385.5,551,7,19],[1387,599,7,19.5],[1221.5,482.5,7,24],[1222.5,530,6.5,23],[1225,553,5,23],[1225,600,6.5,20],[1225.5,620,6.5,23],[1129.5,483,6,20],[1131,531,6,8],[1131.5,550,6.5,27],[1133,600,6.5,20],[1134,620,6.5,19],[1124,538,5.5,16],[1123.5,554,6,23],[1124.5,600.5,7,24],
[948.5,539,5.5,18],[948,555,5.5,24],[949,602,7,24],[1040,538.5,6,18],[1040,554.5,5,23],[1041,601,7,24],[856.5,540,5,17],[858,556,5,10],[857.5,603,6.5,23],[821.5,556,5.5,19],[822.5,601.5,6,19]].forEach(([x, y, w, h]) => { rect(PURPLE, x, y, w, h); if (h > 15) rect('#5a00b8', x, y, w, 2.5); });
[[989.3,306.3],[991,357.3],[1078.3,356.7],[1173,304.7],[1172,346],[1175,371.7],[904.7,544.3],[997,543.7],[1084.7,543],[997,559.3],[906.7,608],[998.3,607],[1086,606.3],[1178.7,488],[1178.3,507],[1273.3,304],[1288.7,322.7],[1290.7,393.7],[1295,535.7],[1298,606.3],[1283,625],[1183,626],[781.5,363]].forEach(([x, y]) => poly(PURPLE, `${x - 2},${y - 5} ${x + 2},${y - 5} ${x + 1},${y - 1} ${x + 2},${y} ${x + 1},${y + 1} ${x + 2},${y + 5} ${x - 2},${y + 5} ${x - 1},${y + 1} ${x - 2},${y} ${x - 1},${y - 1}`));

// Orbit guide
[[1094,479,331],[762,479,30],[1426,479,30],[1094,148,30],[1094,811,30]].forEach(([x, y, r]) => parts.push(`<circle cx="${x}" cy="${y}" r="${r}" fill="none" stroke="#a8a8a8" stroke-width="1.3"/>`));

// Coordinate gizmo
parts.push('<circle cx="537" cy="767" r="5.5" fill="#0f0"/>');
rect('#0000f5', 535, 760, 4, 13); poly('#0000f5', '531.5,762 537,751 542.5,762');
rect('#c4c4c4', 533, 772, 7, 9);
rect('#f00', 540, 774, 16, 4); poly('#f00', '555,771 567,776 555,781');
parts.push('<text x="573" y="781" style="fill:#f00;font-size:15px">X</text><text x="537" y="751" style="fill:#00f;font-size:15px">Z</text>');
svg.innerHTML = parts.join('');
```
